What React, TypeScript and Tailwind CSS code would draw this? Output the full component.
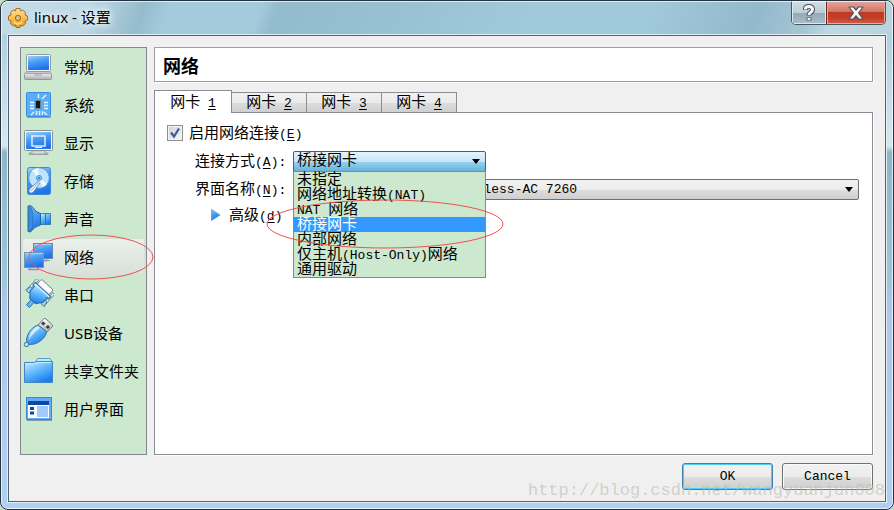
import { useState, type ReactNode } from "react";

const SONG = "font-['Liberation_Mono','Noto_Sans_CJK_SC',monospace]";
const HEI = "font-['Noto_Sans','Noto_Sans_CJK_SC',sans-serif]";

// Latin runs are set smaller than the Chinese ones so both keep the same rhythm.
// An "&" marks the mnemonic letter.
function Song({ text }: { text: string }) {
  const parts = text.split(/([\x20-\x7e]+)/).filter(Boolean);
  return (
    <span className={`${SONG} whitespace-pre pt-1 text-[15px]`}>
      {parts.map((part, i) => {
        if (!/^[\x20-\x7e]/.test(part)) return part;
        const at = part.indexOf("&");
        return (
          <span key={i} className="text-[13px]">
            {at < 0 ? (
              part
            ) : (
              <>
                {part.slice(0, at)}
                <u className="underline-offset-2">{part[at + 1]}</u>
                {part.slice(at + 2)}
              </>
            )}
          </span>
        );
      })}
    </span>
  );
}

function Icon({ children }: { children: ReactNode }) {
  return (
    <svg viewBox="0 0 32 32" className="size-8 shrink-0" aria-hidden="true">
      {children}
    </svg>
  );
}

function IconDefs() {
  return (
    <svg className="absolute size-0" aria-hidden="true">
      <defs>
        <linearGradient id="screen" x1="0" y1="0" x2="0.3" y2="1">
          <stop offset="0" stopColor="#9fd0fb" />
          <stop offset="0.45" stopColor="#4c9ff5" />
          <stop offset="1" stopColor="#1f74ee" />
        </linearGradient>
        <linearGradient id="sky" x1="0" y1="0" x2="0.6" y2="1">
          <stop offset="0" stopColor="#d3f0ff" />
          <stop offset="0.5" stopColor="#66bbfa" />
          <stop offset="1" stopColor="#1c7ff0" />
        </linearGradient>
        <linearGradient id="metal" x1="0" y1="0" x2="0" y2="1">
          <stop offset="0" stopColor="#ffffff" />
          <stop offset="1" stopColor="#a9abad" />
        </linearGradient>
        <linearGradient id="gold" x1="0" y1="0" x2="0" y2="1">
          <stop offset="0" stopColor="#fbe0a0" />
          <stop offset="0.5" stopColor="#f7c04d" />
          <stop offset="1" stopColor="#ef9a1c" />
        </linearGradient>
      </defs>
    </svg>
  );
}

const items = [
  {
    label: "常规",
    icon: (
      <Icon>
        <rect x="4.5" y="3.5" width="24" height="17" rx="1" fill="#f4f6f7" stroke="#969b9f" />
        <rect x="6" y="5" width="21" height="14" fill="url(#screen)" />
        <path d="M4 21H28L29.5 23V27.5Q29.5 28.5 28.5 28.5H3.5Q2.5 28.5 2.5 27.5V23Z" fill="url(#metal)" stroke="#94989b" />
        <path d="M4 22.5H28M12 24H20" stroke="#a3a7aa" />
      </Icon>
    ),
  },
  {
    label: "系统",
    icon: (
      <Icon>
        <rect x="4.5" y="3.5" width="24" height="24" rx="1" fill="#58aefa" stroke="#3b8ce0" />
        <path d="M5 28.5H29" stroke="#8aa4ae" />
        <rect x="13.5" y="11.5" width="5" height="8" fill="#15181b" stroke="#6b8291" />
        <path
          d="M16.5 5V9M20 10L24 6M22 13.5H26M22 16.5H26M22 19.5H26M8 13.5H12M8 16.5H12M8 19.5H12M14.5 22V26M17.5 22V26M20.5 22V26M9 26L12 23M22 23L25 26"
          stroke="#e7f5ff"
          strokeWidth="1.4"
        />
      </Icon>
    ),
  },
  {
    label: "显示",
    icon: (
      <Icon>
        <rect x="2.5" y="3.5" width="28" height="20" rx="1" fill="#f7f8f9" stroke="#898e91" />
        <rect x="4" y="5" width="25" height="17" fill="url(#screen)" />
        <rect x="10" y="9" width="13" height="10" fill="none" stroke="#eaf5ff" strokeWidth="1.4" />
        <path d="M13 20.5H20" stroke="#eaf5ff" />
        <path d="M10 24H23V26H26V27.5H7V26H10Z" fill="url(#metal)" stroke="#8d9193" strokeWidth="0.7" />
      </Icon>
    ),
  },
  {
    label: "存储",
    icon: (
      <Icon>
        <rect x="5.5" y="2.5" width="23" height="27" rx="2" fill="url(#screen)" stroke="#3789d9" />
        <circle cx="17" cy="13" r="10.3" fill="#bfe4ff" stroke="#5394c7" strokeWidth="0.8" />
        <path d="M17 13L10 5.5A10 10 0 0 1 16 3ZM17 13L25 19A10 10 0 0 1 21 22Z" fill="#f3fbff" />
        <circle cx="17" cy="13" r="2.6" fill="#8ccaf5" stroke="#347fc1" strokeWidth="0.7" />
        <circle cx="17" cy="13" r="0.9" fill="#246ba9" />
        <path d="M17.5 18.5L11.5 27Q10 29 7.5 27.5Q6 25.5 8 23.5L16 16.5Z" fill="#e8f3fb" stroke="#59829d" strokeWidth="0.8" />
        <path d="M16 18L8.8 26" stroke="#9ebdd1" />
      </Icon>
    ),
  },
  {
    label: "声音",
    icon: (
      <Icon>
        <path d="M18 10.5H28.5V21.5H18Z" fill="url(#sky)" stroke="#2b6ba2" strokeWidth="0.8" />
        <path d="M6 3Q9 1.5 11 4.5Q13 9 18.5 10.5V22Q12 24 10.5 27Q8.5 30 6 28.5Z" fill="url(#screen)" stroke="#1b62a5" strokeWidth="0.9" />
        <path d="M6.5 3.5Q11 2 11 16Q11 30 6.5 28.5Z" fill="#3d8bdd" stroke="#2468aa" strokeWidth="0.6" />
        <path d="M23.5 10.5V21.5" stroke="#2c74bd" />
      </Icon>
    ),
  },
  {
    label: "网络",
    icon: (
      <Icon>
        <path d="M15 19.5H28M18 18V20H25V18" fill="#c5d0d6" stroke="#8899a5" />
        <rect x="11.5" y="2.5" width="19" height="15" fill="url(#screen)" stroke="#668ba8" />
        <path d="M6 28.5H17M8 27V28" stroke="#8899a5" strokeWidth="1.4" />
        <rect x="2.5" y="11.5" width="19" height="15" fill="url(#screen)" stroke="#7596ad" />
        <path d="M3.5 12.5H20.5M12.5 3.5H29.5" stroke="#a7d2f8" />
      </Icon>
    ),
  },
  {
    label: "串口",
    icon: (
      <Icon>
        <g transform="rotate(42 16 16)">
          <rect x="8" y="2" width="16" height="7" rx="1.5" fill="#fafafa" stroke="#6d7b83" strokeWidth="0.9" />
          <path d="M4 4.5H6.5V18H4ZM25.5 4.5H28V18H25.5Z" fill="#e3ebf0" stroke="#53788f" strokeWidth="0.8" />
          <path d="M5 15H8V20.5H3.5ZM27 15H24V20.5H28.5Z" fill="#9fd4f8" stroke="#376e91" strokeWidth="0.8" />
          <path d="M14 22H18V31H14Z" fill="#61b7f3" stroke="#276ba2" strokeWidth="0.9" />
          <path d="M5.5 8.5H26.5V12H24.5V18L20 24H12L7.5 18V12H5.5Z" fill="url(#sky)" stroke="#276ba2" />
          <path d="M6.5 10H25.5" stroke="#e6f7ff" />
        </g>
      </Icon>
    ),
  },
  {
    label: "USB设备",
    icon: (
      <Icon>
        <path d="M16 8L22 1.5Q23 1 24 2L30.5 8Q31 9 30 10L24 16Z" fill="url(#metal)" stroke="#757a7e" />
        <path d="M21 4.5L23.5 6.5L21.5 8.5L19 6.5ZM26 8L28 10L26 12L23.5 10Z" fill="#3a3d40" />
        <path d="M16 8Q7 11 4.5 22Q4 26 7 27.5Q17 28 23.5 18.5Q25 15 24 14Z" fill="url(#sky)" stroke="#33739e" />
        <path d="M16 9Q8 13 6.5 23Q12 15 18 11Z" fill="#edfaff" opacity="0.75" />
        <circle cx="4.5" cy="27.5" r="2.2" fill="#b9e5ff" stroke="#33739e" />
      </Icon>
    ),
  },
  {
    label: "共享文件夹",
    icon: (
      <Icon>
        <path d="M12.5 9L15.5 3.5H28L29.5 6V9Z" fill="#b9ecff" stroke="#51a5d6" />
        <path d="M2.5 7.5H12L15 6.5H30.5V27.5H2.5Z" fill="url(#sky)" stroke="#4385c3" />
        <path d="M3.5 8.5H12L16 7.5H29.5" fill="none" stroke="#c3f1ff" />
      </Icon>
    ),
  },
  {
    label: "用户界面",
    icon: (
      <Icon>
        <rect x="4.5" y="4.5" width="25" height="22" fill="#62adf9" stroke="#3e86cf" />
        <rect x="6" y="8" width="21" height="4" fill="#0b47a5" />
        <rect x="6" y="12" width="21" height="13" fill="#fafcff" />
        <rect x="15" y="13" width="11" height="11" fill="#a1caff" />
        <path d="M8 14H12V17H8ZM8 18.5H12V21.5H8Z" fill="#0b47a5" />
        <path d="M5 27.5H30" stroke="#819ba8" />
      </Icon>
    ),
  },
];

const modes = ["未指定", "网络地址转换(NAT)", "NAT 网络", "桥接网卡", "内部网络", "仅主机(Host-Only)网络", "通用驱动"];

function Arrow() {
  return (
    <svg viewBox="0 0 8 5" className="pointer-events-none absolute right-1.5 top-2 h-[5px] w-2" aria-hidden="true">
      <path d="M0 0H8L4 5Z" fill="#000" />
    </svg>
  );
}

export default function App() {
  const [section, setSection] = useState(5);
  const [tab, setTab] = useState(1);
  const [mode, setMode] = useState("桥接网卡");
  const [open, setOpen] = useState(true);

  return (
    <div className="bg-[#c5dcc8]">
      <IconDefs />
      <div className="relative flex min-h-screen flex-col overflow-hidden rounded-lg border border-[#26323f] bg-[linear-gradient(180deg,#a5cadb_0px,#b9d5e2_60px,#d5e8f0_145px,#8db7c9_151px,#9fc6d8_280px,#abc7ea_300px,#b0d0f2_100%)] px-1.5 pb-1.5 text-black">
        <div className="pointer-events-none absolute inset-0 rounded-[7px] border border-white/70" />

        {/* title bar */}
        <header className="-mx-1.5 flex h-[33px] items-start justify-between bg-[linear-gradient(110deg,#c3dbe6_0%,#bed9e5_10%,#95bccd_16%,#a4cbdc_19%,#a4cbdc_29%,#92bbce_31%,#98c2d4_45%,#a1c9dc_60%,#a1c9dc_72%,#92b9cc_84%,#a5c6d4_90%,#bfd9e4_93%,#b9d3dd_100%)] pl-1.5 pr-[7px]">
          <div className="flex h-[33px] items-center gap-[5px]">
            <svg viewBox="0 0 22 22" className="size-[22px]" aria-hidden="true">
              <path
                d="M9 1.5H13L13.5 4L15.5 3L18.5 5.5L18 8L20.5 9V13L18 14L18.5 16.5L15.5 19L13.5 18L13 20.5H9L8.5 18L6.5 19L3.5 16.5L4 14L1.5 13V9L4 8L3.5 5.5L6.5 3L8.5 4Z"
                fill="url(#gold)"
                stroke="#9a611c"
                strokeWidth="0.9"
                strokeLinejoin="round"
              />
              <circle cx="11" cy="11" r="2.6" fill="#d8c19a" stroke="#96611e" />
              <path d="M7 15Q11 19 15 15" fill="none" stroke="#ffe693" strokeWidth="1.4" />
            </svg>
            <h1 className={`${HEI} text-[15px] [text-shadow:0_0_8px_#fff,0_0_8px_#fff]`}>linux - 设置</h1>
          </div>
          <div className="flex h-6 overflow-hidden rounded-b-[5px] border border-t-0 border-[#47565f]">
            <button
              type="button"
              aria-label="帮助"
              className="flex w-[34px] items-center justify-center bg-[linear-gradient(#d2dfe6_0%,#bccdd6_50%,#93a9b5_52%,#a9bec8_100%)] shadow-[inset_0_0_0_1px_#dce9f0]"
            >
              <svg viewBox="0 0 14 20" className="h-5 w-3.5" aria-hidden="true">
                <path d="M3.5 7V5.5Q3.5 3.5 7 3.5T10.5 6.5Q10.5 8.5 8.5 9.5Q7 10.5 7 12.5M7 14.5V17.5" fill="none" stroke="#4b5665" strokeWidth="5" />
                <path d="M3.5 6.5V5.5Q3.5 3.5 7 3.5T10.5 6.5Q10.5 8.5 8.5 9.5Q7 10.5 7 12M7 15V17" fill="none" stroke="#f4f4f4" strokeWidth="3" />
              </svg>
            </button>
            <button
              type="button"
              aria-label="关闭"
              className="flex w-[59px] items-center justify-center border-l border-[#6b2118] bg-[linear-gradient(#e2a79d_0%,#d3796b_45%,#bd3a24_50%,#c43f27_75%,#d5614a_100%)] shadow-[inset_0_0_0_1px_#e8a89e]"
            >
              <svg viewBox="0 0 16 14" className="h-3.5 w-4" aria-hidden="true">
                <path
                  d="M1 1H5.5L8 4L10.5 1H15L10.5 7L15 13H10.5L8 10L5.5 13H1L5.5 7Z"
                  fill="#f7f7f7"
                  stroke="#51545f"
                  strokeWidth="1.2"
                  strokeLinejoin="round"
                />
              </svg>
            </button>
          </div>
        </header>

        <div className="relative flex grow flex-col border border-[#e3eff5]">
          <div className="flex grow flex-col gap-2 border border-[#53626e] bg-[#f0f0f0] p-[11px] pr-3">
            <div className="flex grow gap-[7px]">
              {/* categories */}
              <nav className="relative w-[127px] shrink-0 border border-[#828790] bg-[#cce8cf] px-px">
                {items.map((item, i) => (
                  <button
                    key={item.label}
                    type="button"
                    onClick={() => setSection(i)}
                    className={`${HEI} flex h-[38px] w-full items-center gap-2.5 whitespace-nowrap rounded-[3px] text-[15px] ${
                      i === section ? "bg-[linear-gradient(#eaf1ea,#d9dfd9)] shadow-[inset_0_0_0_1px_#d3e0d5]" : ""
                    }`}
                  >
                    {item.icon}
                    {item.label}
                  </button>
                ))}
                <svg viewBox="0 0 126 46" className="pointer-events-none absolute left-[7px] top-[186px] h-[46px] w-[126px]" aria-hidden="true">
                  <ellipse cx="63" cy="23" rx="62" ry="22" fill="none" stroke="#f0514d" />
                </svg>
              </nav>

              <main className="flex min-w-0 grow flex-col">
                <h2 className="flex h-[35px] items-center border border-[#9d9fa3] bg-white px-2 font-['Noto_Sans_CJK_SC',sans-serif] text-lg font-bold shadow-[1px_1px_0_#fff]">
                  网络
                </h2>
                <div role="tablist" className="mt-2 flex items-end">
                  {[1, 2, 3, 4].map((n) => (
                    <button
                      key={n}
                      type="button"
                      role="tab"
                      aria-selected={n === tab}
                      onClick={() => setTab(n)}
                      className={`flex items-center justify-center border-[#898c95] ${
                        n === tab
                          ? "relative -mb-px h-[23px] w-[78px] border border-b-0 bg-white"
                          : "h-5 w-[75px] border-r border-t bg-[linear-gradient(#f2f2f2_0%,#ebebeb_50%,#dddddd_52%,#cfcfcf_100%)]"
                      }`}
                    >
                      <Song text={`网卡 &${n}`} />
                    </button>
                  ))}
                </div>

                <section className="grow border border-[#898c95] bg-white pb-2 pl-3 pr-[13px] pt-1.5 shadow-[1px_1px_0_#fff]">
                  <label className="flex h-7 w-fit items-center gap-1.5">
                    <span className="relative size-4">
                      <input
                        type="checkbox"
                        defaultChecked
                        className="peer block size-4 appearance-none border border-[#8e8f8f] bg-[linear-gradient(135deg,#cfd3d8,#f7f7f7)] shadow-[inset_0_0_0_1px_#f4f4f4]"
                      />
                      <svg viewBox="0 0 16 16" className="pointer-events-none absolute inset-0 hidden size-4 peer-checked:block" aria-hidden="true">
                        <path d="M4 7.5L7 11.5L12 3.5" fill="none" stroke="#43579c" strokeWidth="2.2" />
                      </svg>
                    </span>
                    <Song text="启用网络连接(&E)" />
                  </label>

                  <div className="grid grid-cols-[98px_1fr] pl-7">
                    <label htmlFor="mode" className="flex h-7 items-center">
                      <Song text="连接方式(&A):" />
                    </label>
                    <div className="relative flex h-7 w-[193px] items-center">
                      <div className="relative w-full">
                        <select
                          id="mode"
                          value={mode}
                          onChange={(e) => setMode(e.target.value)}
                          onClick={() => setOpen(!open)}
                          className={`${SONG} block h-[21px] w-full appearance-none rounded-[2px] border border-[#2f6689] bg-[linear-gradient(#e5f4fc_0%,#c6e5f6_50%,#98d1ef_52%,#68b3db_100%)] px-[3px] text-[15px] leading-[19px] outline-none`}
                        >
                          {modes.map((m) => (
                            <option key={m}>{m}</option>
                          ))}
                        </select>
                        <Arrow />
                      </div>
                      {open && (
                        <ul role="listbox" className="absolute left-0 top-6 z-10 w-full border border-[#7d8f83] bg-[#cce8cf]">
                          {modes.map((m) => (
                            <li
                              key={m}
                              role="option"
                              aria-selected={m === mode}
                              onClick={() => {
                                setMode(m);
                                setOpen(false);
                              }}
                              className={`flex h-[15px] items-center border border-dotted px-0.5 ${
                                m === mode ? "border-[#8a7c80] bg-[#3399ff] text-white" : "border-transparent"
                              }`}
                            >
                              <Song text={m} />
                            </li>
                          ))}
                        </ul>
                      )}
                      <svg viewBox="0 0 238 50" className="pointer-events-none absolute -left-[27px] top-[52px] z-20 h-[50px] w-[238px] max-w-none" aria-hidden="true">
                        <ellipse cx="119" cy="25" rx="118" ry="24" fill="none" stroke="#f0514d" />
                      </svg>
                    </div>

                    <label htmlFor="adapter" className="flex h-7 items-center">
                      <Song text="界面名称(&N):" />
                    </label>
                    <div className="flex h-7 items-center">
                      <div className="relative w-full">
                        <select
                          id="adapter"
                          className={`${SONG} block h-[21px] w-full appearance-none rounded-[2px] border border-[#707070] bg-[linear-gradient(#f2f2f2_0%,#ebebeb_50%,#dddddd_52%,#cfcfcf_100%)] px-2.5 text-[13px] leading-[19px]`}
                        >
                          <option>Intel(R) Dual Band Wireless-AC 7260</option>
                        </select>
                        <Arrow />
                      </div>
                    </div>
                  </div>

                  <button type="button" className="ml-11 flex h-6 items-center gap-2">
                    <svg viewBox="0 0 10 12" className="h-3 w-2.5" aria-hidden="true">
                      <path d="M0.5 0.5L9 6L0.5 11.5Z" fill="url(#screen)" stroke="#4a9be0" strokeWidth="0.8" />
                    </svg>
                    <Song text="高级(&d)" />
                  </button>
                </section>
              </main>
            </div>

            <footer className="flex justify-end gap-[9px]">
              <button
                type="button"
                className={`${SONG} h-[27px] w-[91px] rounded-[3px] border border-[#3c7fb1] bg-[linear-gradient(#f2f2f2_0%,#ebebeb_50%,#dddddd_52%,#cfcfcf_100%)] text-[13px] shadow-[inset_0_0_0_1px_#48d0f8]`}
              >
                OK
              </button>
              <button
                type="button"
                className={`${SONG} h-[27px] w-[91px] rounded-[3px] border border-[#707070] bg-[linear-gradient(#f2f2f2_0%,#ebebeb_50%,#dddddd_52%,#cfcfcf_100%)] text-[13px] shadow-[inset_0_0_0_1px_#fafafa]`}
              >
                Cancel
              </button>
            </footer>
          </div>
        </div>

        <p className={`${SONG} pointer-events-none absolute bottom-1.5 right-2 text-[17px] text-[#b9bab0]/60`}>
          http://blog.csdn.net/wangyuanjun008
        </p>
      </div>
    </div>
  );
}
